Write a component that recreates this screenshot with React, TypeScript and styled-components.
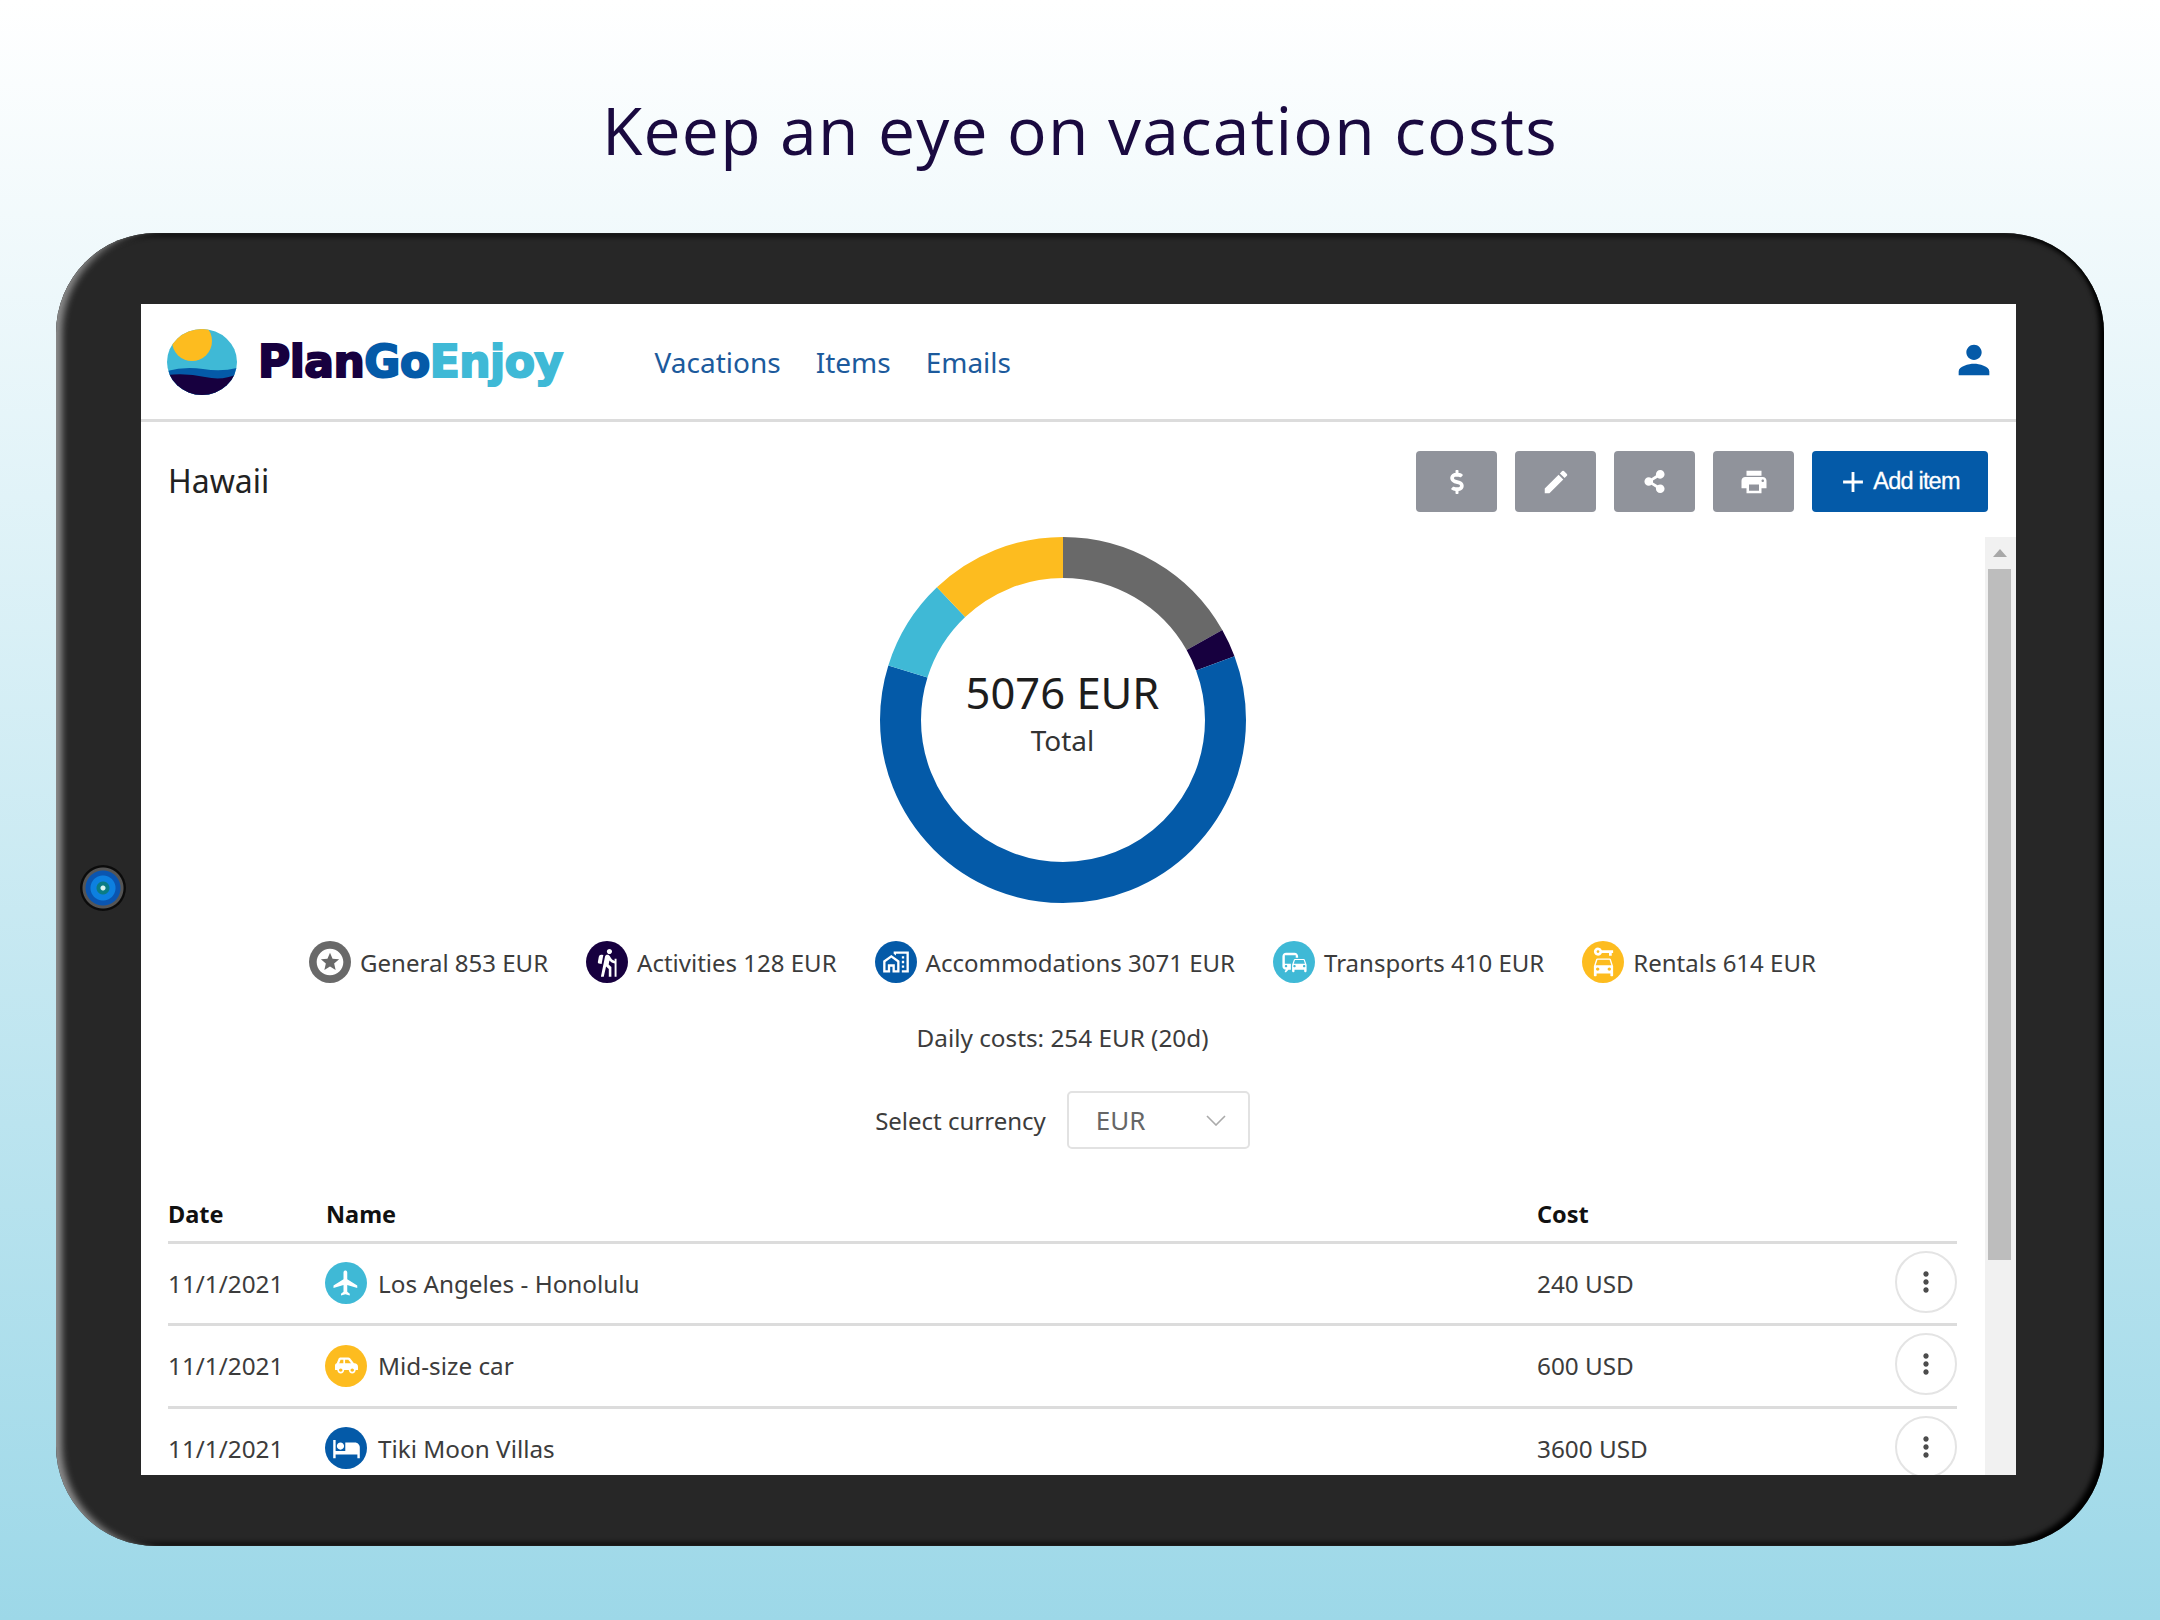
import React from "react";
import styled, { createGlobalStyle } from "styled-components";
import { FaDollarSign, FaCarSide, FaShareAlt } from "react-icons/fa";
import {
  MdPerson,
  MdEdit,
  MdPrint,
  MdAdd,
  MdMoreVert,
  MdFlight,
  MdHotel,
  MdStars,
  MdHiking,
  MdOutlineHomeWork,
  MdCommute,
  MdCarRental,
} from "react-icons/md";

const COLOR = {
  navy: "#17003f",
  blue: "#045aa8",
  cyan: "#3fb9d6",
  yellow: "#fdbc1f",
  gray: "#696969",
  line: "#dcdcdc",
  text: "#3c3c3c",
};

const SEGMENTS = [
  { label: "General", value: 853, color: COLOR.gray, icon: <MdStars size={32} /> },
  { label: "Activities", value: 128, color: COLOR.navy, icon: <MdHiking size={31} /> },
  { label: "Accommodations", value: 3071, color: COLOR.blue, icon: <MdOutlineHomeWork size={28} /> },
  { label: "Transports", value: 410, color: COLOR.cyan, icon: <MdCommute size={29} /> },
  { label: "Rentals", value: 614, color: COLOR.yellow, icon: <MdCarRental size={33} /> },
];

const ROWS = [
  { date: "11/1/2021", name: "Los Angeles - Honolulu", cost: "240 USD", color: COLOR.cyan, icon: <MdFlight size={30} /> },
  { date: "11/1/2021", name: "Mid-size car", cost: "600 USD", color: COLOR.yellow, icon: <FaCarSide size={23} /> },
  { date: "11/1/2021", name: "Tiki Moon Villas", cost: "3600 USD", color: COLOR.blue, icon: <MdHotel size={29} /> },
];

const GlobalStyle = createGlobalStyle`
  html, body {
    margin: 0;
    padding: 0;
  }
  body {
    font-family: "Noto Sans", "Open Sans", sans-serif;
  }
  * {
    box-sizing: border-box;
  }
`;

const Page = styled.div`
  width: 2160px;
  height: 1620px;
  overflow: hidden;
  background: linear-gradient(#ffffff, #9dd8e8);
`;

const Title = styled.h1`
  height: 233px;
  margin: 0;
  padding-top: 24px;
  display: flex;
  align-items: center;
  justify-content: center;
  font-family: "Open Sans", sans-serif;
  font-size: 66px;
  font-weight: 400;
  letter-spacing: 1.2px;
  color: #1a0a40;
`;

const Tablet = styled.div`
  position: relative;
  width: 2048px;
  height: 1313px;
  margin-left: 56px;
  padding: 71px 88px 71px 85px;
  border-radius: 100px;
  background: #272727;
  box-shadow: inset 9px 0 7px -3px #8d8d8d, inset -7px -5px 5px -2px #000, inset 0 5px 5px -2px #000;
`;

const Camera = styled.div`
  position: absolute;
  left: 24px;
  top: 632px;
  width: 46px;
  height: 46px;
  border-radius: 50%;
  background: radial-gradient(
    circle,
    #d8f4f2 0 2px,
    #0a7c84 3px 6px,
    #0d80e0 7px 12px,
    #0a55b0 13px 17px,
    #555 18px 20px,
    #0b0b0b 21px
  );
`;

const Screen = styled.div`
  height: 100%;
  overflow: hidden;
  background: #fff;
`;

const Header = styled.header`
  height: 118px;
  padding: 0 27px 0 26px;
  display: flex;
  align-items: center;
  border-bottom: 3px solid ${COLOR.line};
`;

const Brand = styled.div`
  display: flex;
  align-items: center;
  gap: 21px;
  margin-right: 92px;
`;

const BrandName = styled.span`
  font-family: "DejaVu Sans", sans-serif;
  font-size: 44px;
  font-weight: 700;
  letter-spacing: -0.5px;
  -webkit-text-stroke: 2px currentColor;
  color: ${COLOR.navy};
`;

const BrandPart = styled.span<{ $color: string }>`
  color: ${(p) => p.$color};
`;

const Nav = styled.nav`
  display: flex;
  gap: 35px;
  flex: 1;
`;

const NavLink = styled.a`
  font-size: 28px;
  color: #1c5a9c;
`;

const UserIcon = styled.div`
  display: flex;
  color: ${COLOR.blue};
  margin: -4px -8px 0 0;
`;

const Toolbar = styled.div`
  height: 115px;
  padding: 29px 28px 0 27px;
  display: flex;
  align-items: flex-start;
  justify-content: space-between;
`;

const PageName = styled.h2`
  margin: -1px 0 0;
  font-size: 32px;
  line-height: 61px;
  font-weight: 400;
  color: #222;
`;

const Actions = styled.div`
  display: flex;
  gap: 18px;
`;

const IconButton = styled.button`
  width: 81px;
  height: 61px;
  padding: 0;
  display: flex;
  align-items: center;
  justify-content: center;
  border: none;
  border-radius: 4px;
  background: #90939b;
  color: #fff;
`;

const AddButton = styled.button`
  width: 176px;
  height: 61px;
  padding: 0 4px 0 0;
  display: flex;
  align-items: center;
  justify-content: center;
  gap: 3px;
  border: none;
  border-radius: 4px;
  background: ${COLOR.blue};
  color: #fff;
  font-family: "Liberation Sans", sans-serif;
  font-size: 23.5px;
  letter-spacing: -0.8px;
  -webkit-text-stroke: 0.3px currentColor;
`;

const Body = styled.div`
  display: flex;
  align-items: flex-start;
`;

const Content = styled.main`
  flex: 1;
  min-width: 0;
  padding: 0 28px 0 27px;
  display: flex;
  flex-direction: column;
  align-items: center;
`;

const Donut = styled.div`
  display: grid;
  width: 366px;
  height: 366px;

  & > * {
    grid-area: 1 / 1;
  }
`;

const DonutCenter = styled.div`
  place-self: center;
  margin-top: -16px;
  display: flex;
  flex-direction: column;
  align-items: center;
`;

const DonutTotal = styled.span`
  font-size: 43.5px;
  line-height: 56px;
  color: #1d1d1d;
`;

const DonutLabel = styled.span`
  font-size: 28px;
  line-height: 40px;
  color: #333;
`;

const Legend = styled.div`
  margin-top: 38px;
  display: flex;
  gap: 38px;
`;

const LegendItem = styled.div`
  display: flex;
  align-items: center;
  gap: 9px;
  font-size: 24px;
  color: ${COLOR.text};
  white-space: nowrap;
`;

const Badge = styled.span<{ $color: string }>`
  width: 42px;
  height: 42px;
  flex: none;
  display: flex;
  align-items: center;
  justify-content: center;
  border-radius: 50%;
  background: ${(p) => p.$color};
  color: #fff;
`;

const Daily = styled.p`
  margin: 38px 0 0;
  font-size: 24.3px;
  line-height: 34px;
  color: ${COLOR.text};
`;

const CurrencyRow = styled.div`
  margin-top: 36px;
  display: flex;
  align-items: center;
  gap: 21px;
  font-size: 24px;
  color: ${COLOR.text};
`;

const Select = styled.div`
  width: 183px;
  height: 58px;
  padding: 0 22px 0 27px;
  display: flex;
  align-items: center;
  justify-content: space-between;
  border: 2px solid #e2e2e2;
  border-radius: 5px;
  font-size: 26px;
  color: #666;
`;

const Table = styled.div`
  width: 100%;
  margin-top: 39px;
`;

const Row = styled.div<{ $head?: boolean }>`
  height: ${(p) => (p.$head ? "55.5px" : "82.5px")};
  display: grid;
  grid-template-columns: 158px 1211px 1fr 62px;
  align-items: center;
  border-bottom: 3px solid ${COLOR.line};
  font-size: ${(p) => (p.$head ? "23.5px" : "24.3px")};
  font-weight: ${(p) => (p.$head ? 700 : 400)};
  color: ${(p) => (p.$head ? "#111" : COLOR.text)};
`;

const NameCell = styled.div`
  display: flex;
  align-items: center;
  gap: 11px;
  margin-left: -1px;
`;

const MoreButton = styled.button`
  width: 62px;
  height: 62px;
  padding: 0;
  margin-top: -3px;
  display: flex;
  align-items: center;
  justify-content: center;
  border: 2px solid #e4e4e4;
  border-radius: 50%;
  background: #fff;
  color: #4c4c4c;
`;

const Scrollbar = styled.div`
  width: 31px;
  height: 960px;
  flex: none;
  padding: 0 5px 0 3px;
  background: #f1f1f1;
`;

const ScrollArrow = styled.div`
  height: 32px;
  display: flex;
  align-items: center;
  justify-content: center;

  &::before {
    content: "";
    border-left: 7px solid transparent;
    border-right: 7px solid transparent;
    border-bottom: 8px solid #a8a8a8;
  }
`;

const ScrollThumb = styled.div`
  height: 691px;
  background: #bdbdbd;
`;

const Logo = () => (
  <svg width="70" height="66" viewBox="0 0 70 66">
    <defs>
      <clipPath id="logoDisc">
        <ellipse cx="35" cy="33" rx="35" ry="33" />
      </clipPath>
    </defs>
    <g clipPath="url(#logoDisc)">
      <rect width="70" height="66" fill={COLOR.cyan} />
      <circle cx="25" cy="12" r="20" fill={COLOR.yellow} />
      <path d="M0 42 Q18 37 36 40 T70 39 V66 H0 Z" fill={COLOR.blue} />
      <path d="M0 46 Q20 44 38 48 T70 45 V66 H0 Z" fill={COLOR.navy} />
    </g>
  </svg>
);

const DonutChart = () => {
  const total = SEGMENTS.reduce((sum, s) => sum + s.value, 0);
  let start = 0;
  return (
    <svg width="366" height="366" viewBox="0 0 366 366">
      <g transform="rotate(-90 183 183)" fill="none" strokeWidth="41">
        {SEGMENTS.map((s) => {
          const sweep = (s.value / total) * 360;
          const arc = (
            <circle
              key={s.label}
              cx="183"
              cy="183"
              r="162.5"
              stroke={s.color}
              pathLength={360}
              strokeDasharray={`${sweep} ${360 - sweep}`}
              strokeDashoffset={-start}
            />
          );
          start += sweep;
          return arc;
        })}
      </g>
    </svg>
  );
};

const App = () => {
  return (
    <Page>
      <GlobalStyle />
      <Title>Keep an eye on vacation costs</Title>
      <Tablet>
        <Camera />
        <Screen>
          <Header>
            <Brand>
              <Logo />
              <BrandName>
                Plan
                <BrandPart $color={COLOR.blue}>Go</BrandPart>
                <BrandPart $color={COLOR.cyan}>Enjoy</BrandPart>
              </BrandName>
            </Brand>
            <Nav>
              <NavLink>Vacations</NavLink>
              <NavLink>Items</NavLink>
              <NavLink>Emails</NavLink>
            </Nav>
            <UserIcon>
              <MdPerson size={46} />
            </UserIcon>
          </Header>
          <Toolbar>
            <PageName>Hawaii</PageName>
            <Actions>
              <IconButton><FaDollarSign size={24} /></IconButton>
              <IconButton><MdEdit size={30} /></IconButton>
              <IconButton><FaShareAlt size={23} /></IconButton>
              <IconButton><MdPrint size={30} /></IconButton>
              <AddButton><MdAdd size={34} />Add item</AddButton>
            </Actions>
          </Toolbar>
          <Body>
            <Content>
              <Donut>
                <DonutChart />
                <DonutCenter>
                  <DonutTotal>5076 EUR</DonutTotal>
                  <DonutLabel>Total</DonutLabel>
                </DonutCenter>
              </Donut>
              <Legend>
                {SEGMENTS.map((s) => (
                  <LegendItem key={s.label}>
                    <Badge $color={s.color}>{s.icon}</Badge>
                    {s.label} {s.value} EUR
                  </LegendItem>
                ))}
              </Legend>
              <Daily>Daily costs: 254 EUR (20d)</Daily>
              <CurrencyRow>
                Select currency
                <Select>
                  EUR
                  <svg width="20" height="11" viewBox="0 0 20 11" fill="none" stroke="#aaa" strokeWidth="1.6">
                    <path d="M1 1l9 9 9-9" />
                  </svg>
                </Select>
              </CurrencyRow>
              <Table>
                <Row $head>
                  <span>Date</span>
                  <span>Name</span>
                  <span>Cost</span>
                </Row>
                {ROWS.map((r) => (
                  <Row key={r.name}>
                    <span>{r.date}</span>
                    <NameCell>
                      <Badge $color={r.color}>{r.icon}</Badge>
                      {r.name}
                    </NameCell>
                    <span>{r.cost}</span>
                    <MoreButton><MdMoreVert size={32} /></MoreButton>
                  </Row>
                ))}
              </Table>
            </Content>
            <Scrollbar>
              <ScrollArrow />
              <ScrollThumb />
            </Scrollbar>
          </Body>
        </Screen>
      </Tablet>
    </Page>
  );
};

export default App;
